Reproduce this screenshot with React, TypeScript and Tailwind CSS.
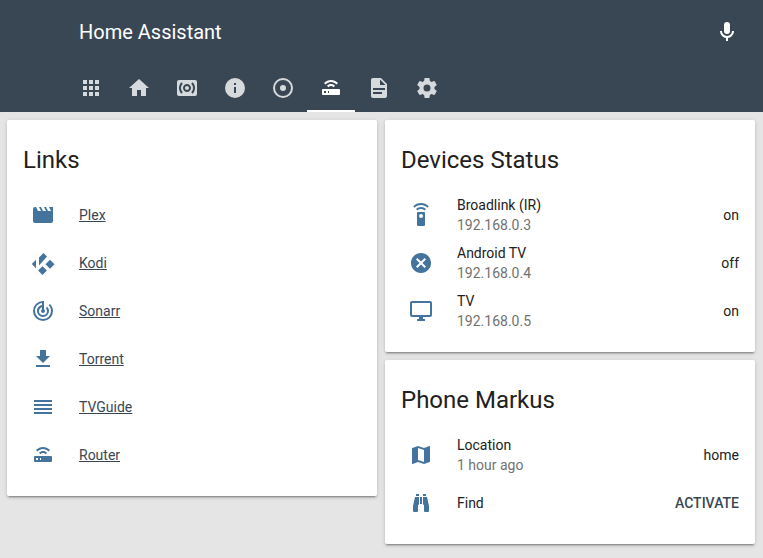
import type { ReactNode } from "react"

const paths = {
  apps: "M16,20H20V16H16M16,14H20V10H16M10,8H14V4H10M16,8H20V4H16M10,14H14V10H10M4,14H8V10H4M4,20H8V16H4M10,20H14V16H10M4,8H8V4H4V8Z",
  home: "M10,20V14H14V20H19V12H22L12,3L2,12H5V20H10Z",
  surround:
    "M20,4H4a2,2 0 0 0-2,2v12a2,2 0 0 0 2,2h16a2,2 0 0 0 2-2V6a2,2 0 0 0-2-2zM7.76,16.24l-1.41,1.41C4.78,16.1 4,14.05 4,12c0-2.05.78-4.1 2.34-5.66l1.41,1.41C6.59,8.93 6,10.46 6,12s.59,3.07 1.76,4.24zM12,16c-2.21,0-4-1.79-4-4s1.79-4 4-4 4,1.79 4,4-1.79,4-4,4zm5.66,1.66l-1.41-1.41C17.41,15.07 18,13.54 18,12s-.59-3.07-1.76-4.24l1.41-1.41C19.22,7.9 20,9.95 20,12c0,2.05-.78,4.1-2.34,5.66zM12,10c-1.1,0-2,.9-2,2s.9,2 2,2 2-.9 2-2-.9-2-2-2z",
  info: "M13,9H11V7H13M13,17H11V11H13M12,2A10,10 0 0,0 2,12A10,10 0 0,0 12,22A10,10 0 0,0 22,12A10,10 0 0,0 12,2Z",
  record:
    "M12,20A8,8 0 0,1 4,12A8,8 0 0,1 12,4A8,8 0 0,1 20,12A8,8 0 0,1 12,20M12,2A10,10 0 0,0 2,12A10,10 0 0,0 12,22A10,10 0 0,0 22,12A10,10 0 0,0 12,2M12,9A3,3 0 0,0 9,12A3,3 0 0,0 12,15A3,3 0 0,0 15,12A3,3 0 0,0 12,9Z",
  router:
    "M4,13H20A1,1 0 0,1 21,14V18A1,1 0 0,1 20,19H4A1,1 0 0,1 3,18V14A1,1 0 0,1 4,13M9,17H10V15H9V17M5,15V17H7V15H5M12,4C14.5,4 17,5 19,7L17.5,8.5C16,7 14,6 12,6C10,6 8,7 6.5,8.5L5,7C7,5 9.5,4 12,4M12,8C13.5,8 15,8.6 16,9.7L14.5,11.2C13.8,10.5 13,10 12,10C11,10 10.2,10.5 9.5,11.2L8,9.7C9,8.6 10.5,8 12,8Z",
  file: "M13,9H18.5L13,3.5V9M6,2H14L20,8V20A2,2 0 0,1 18,22H6C4.89,22 4,21.1 4,20V4C4,2.89 4.89,2 6,2M15,18V16H6V18H15M18,14V12H6V14H18Z",
  settings:
    "M12,15.5A3.5,3.5 0 0,1 8.5,12A3.5,3.5 0 0,1 12,8.5A3.5,3.5 0 0,1 15.5,12A3.5,3.5 0 0,1 12,15.5M19.43,12.97C19.47,12.65 19.5,12.33 19.5,12C19.5,11.67 19.47,11.34 19.43,11L21.54,9.37C21.73,9.22 21.78,8.95 21.66,8.73L19.66,5.27C19.54,5.05 19.27,4.96 19.05,5.05L16.56,6.05C16.04,5.66 15.5,5.32 14.87,5.07L14.5,2.42C14.46,2.18 14.25,2 14,2H10C9.75,2 9.54,2.18 9.5,2.42L9.13,5.07C8.5,5.32 7.96,5.66 7.44,6.05L4.95,5.05C4.73,4.96 4.46,5.05 4.34,5.27L2.34,8.73C2.21,8.95 2.27,9.22 2.46,9.37L4.57,11C4.53,11.34 4.5,11.67 4.5,12C4.5,12.33 4.53,12.65 4.57,12.97L2.46,14.63C2.27,14.78 2.21,15.05 2.34,15.27L4.34,18.73C4.46,18.95 4.73,19.03 4.95,18.95L7.44,17.94C7.96,18.34 8.5,18.68 9.13,18.93L9.5,21.58C9.54,21.82 9.75,22 10,22H14C14.25,22 14.46,21.82 14.5,21.58L14.87,18.93C15.5,18.67 16.04,18.34 16.56,17.94L19.05,18.95C19.27,19.03 19.54,18.95 19.66,18.73L21.66,15.27C21.78,15.05 21.73,14.78 21.54,14.63L19.43,12.97Z",
  mic: "M12,2A3,3 0 0,1 15,5V11A3,3 0 0,1 12,14A3,3 0 0,1 9,11V5A3,3 0 0,1 12,2M19,11C19,14.53 16.39,17.44 13,17.93V21H11V17.93C7.61,17.44 5,14.53 5,11H7A5,5 0 0,0 12,16A5,5 0 0,0 17,11H19Z",
  movie: "M18,4L20,8H17L15,4H13L15,8H12L10,4H8L10,8H7L5,4H4A2,2 0 0,0 2,6V18A2,2 0 0,0 4,20H20A2,2 0 0,0 22,18V4H18Z",
  kodi: "M12.5,2L16,5.5L8,14.5V6.5ZM19,8.8L23.5,13.3L19,17.8L14.5,13.3ZM11.5,15.3L15.9,19.6L11.5,24L7.1,19.6ZM5,8.7V17.3L0.8,13Z",
  radar:
    "M19.07,4.93L17.66,6.34C19.1,7.79 20,9.79 20,12A8,8 0 0,1 12,20A8,8 0 0,1 4,12C4,7.92 7.05,4.56 11,4.07V6.09C8.16,6.57 6,9.03 6,12A6,6 0 0,0 12,18A6,6 0 0,0 18,12C18,10.34 17.33,8.84 16.24,7.76L14.83,9.17C15.55,9.9 16,10.9 16,12A4,4 0 0,1 12,16A4,4 0 0,1 8,12C8,10.14 9.28,8.59 11,8.14V10.28C10.4,10.63 10,11.26 10,12A2,2 0 0,0 12,14A2,2 0 0,0 14,12C14,11.26 13.6,10.62 13,10.28V2H12A10,10 0 0,0 2,12A10,10 0 0,0 12,22A10,10 0 0,0 22,12C22,9.24 20.88,6.74 19.07,4.93Z",
  download: "M5,20H19V18H5M19,9H15V3H9V9H5L12,16L19,9Z",
  headline: "M3,5H21V7H3V5M3,9H21V11H3V9M3,13H21V15H3V13M3,17H21V19H3V17Z",
  remote:
    "M12,0C8.96,0 6.21,1.23 4.22,3.22L5.63,4.63C7.26,3 9.5,2 12,2C14.5,2 16.74,3 18.36,4.64L19.78,3.22C17.79,1.23 15.04,0 12,0M7.05,6.05L8.46,7.46C9.37,6.56 10.62,6 12,6C13.38,6 14.63,6.56 15.54,7.46L16.95,6.05C15.68,4.78 13.93,4 12,4C10.07,4 8.32,4.78 7.05,6.05M12,15A2,2 0 0,1 10,13A2,2 0 0,1 12,11A2,2 0 0,1 14,13A2,2 0 0,1 12,15M15,9H9A1,1 0 0,0 8,10V22A1,1 0 0,0 9,23H15A1,1 0 0,0 16,22V10A1,1 0 0,0 15,9Z",
  closeCircle:
    "M12,2C17.53,2 22,6.47 22,12C22,17.53 17.53,22 12,22C6.47,22 2,17.53 2,12C2,6.47 6.47,2 12,2M15.59,7L12,10.59L8.41,7L7,8.41L10.59,12L7,15.59L8.41,17L12,13.41L15.59,17L17,15.59L13.41,12L17,8.41L15.59,7Z",
  monitor: "M21,16H3V4H21M21,2H3C1.89,2 1,2.89 1,4V16A2,2 0 0,0 3,18H10V20H8V22H16V20H14V18H21A2,2 0 0,0 23,16V4C23,2.89 22.1,2 21,2Z",
  map: "M15,19L9,16.89V5L15,7.11M20.5,3C20.44,3 20.39,3 20.34,3L15,5.1L9,3L3.36,4.9C3.15,4.97 3,5.15 3,5.38V20.5A0.5,0.5 0 0,0 3.5,21C3.55,21 3.61,21 3.66,20.97L9,18.9L15,21L20.64,19.1C20.85,19.03 21,18.85 21,18.62V3.5A0.5,0.5 0 0,0 20.5,3Z",
  binoculars:
    "M11,6H13V13H11V6M9,20A1,1 0 0,1 8,21H5A1,1 0 0,1 4,20V15L6,6H10V13A1,1 0 0,1 9,14V20M10,5H7V3H10V5M15,20V14A1,1 0 0,1 14,13V6H18L20,15V20A1,1 0 0,1 19,21H16A1,1 0 0,1 15,20M14,5V3H17V5H14Z",
}

type IconName = keyof typeof paths

function Icon({ name, className }: { name: IconName; className: string }) {
  return (
    <svg viewBox="0 0 24 24" className={`h-6 w-6 ${className}`} fill="currentColor" fillRule="evenodd">
      <path d={paths[name]} />
    </svg>
  )
}

const tabs: IconName[] = ["apps", "home", "surround", "info", "record", "router", "file", "settings"]

const links: { icon: IconName; label: string }[] = [
  { icon: "movie", label: "Plex" },
  { icon: "kodi", label: "Kodi" },
  { icon: "radar", label: "Sonarr" },
  { icon: "download", label: "Torrent" },
  { icon: "headline", label: "TVGuide" },
  { icon: "router", label: "Router" },
]

const devices: { icon: IconName; name: string; ip: string; state: string }[] = [
  { icon: "remote", name: "Broadlink (IR)", ip: "192.168.0.3", state: "on" },
  { icon: "closeCircle", name: "Android TV", ip: "192.168.0.4", state: "off" },
  { icon: "monitor", name: "TV", ip: "192.168.0.5", state: "on" },
]

function Card({ title, children }: { title: string; children: ReactNode }) {
  return (
    <section className="w-full rounded-[2px] bg-white px-4 pb-[17px] shadow-[0_2px_2px_0_rgba(0,0,0,0.14),0_1px_5px_0_rgba(0,0,0,0.12),0_3px_1px_-2px_rgba(0,0,0,0.2)]">
      <h2 className="pb-[15px] pt-6 text-2xl leading-8 text-[#212121]">{title}</h2>
      {children}
    </section>
  )
}

function Row({ icon, children }: { icon: IconName; children: ReactNode }) {
  return (
    <div className="flex h-12 items-center">
      <div className="flex w-10 shrink-0 justify-center">
        <Icon name={icon} className="text-[#44739e]" />
      </div>
      <div className="ml-4 flex flex-1 items-center justify-between">{children}</div>
    </div>
  )
}

function TwoLines({ primary, secondary }: { primary: string; secondary: string }) {
  return (
    <div>
      <div className="leading-5">{primary}</div>
      <div className="leading-5 text-[#727272]">{secondary}</div>
    </div>
  )
}

export default function App() {
  return (
    <div className="min-h-[558px] bg-[#e5e5e5] font-['Roboto',sans-serif] text-sm text-[#212121]">
      <header className="h-28 bg-[#394754]">
        <div className="flex h-16 items-center justify-between pl-[79px] pr-6">
          <h1 className="text-xl text-white">Home Assistant</h1>
          <Icon name="mic" className="text-white" />
        </div>
        <nav className="flex h-12 pl-[67px]">
          {tabs.map((tab) => (
            <div
              key={tab}
              className={`flex w-12 items-center justify-center ${
                tab === "router" ? "shadow-[inset_0_-2px_0_#ffffff]" : ""
              }`}
            >
              <Icon name={tab} className={tab === "router" ? "text-white" : "text-[#d7dadc]"} />
            </div>
          ))}
        </nav>
      </header>

      <main className="grid grid-cols-[370px_370px] items-start gap-2 pl-[7px] pt-2">
        <Card title="Links">
          {links.map((link) => (
            <Row key={link.label} icon={link.icon}>
              <a href="#" className="text-[#394754] underline">
                {link.label}
              </a>
            </Row>
          ))}
        </Card>

        <div className="flex flex-col gap-2">
          <Card title="Devices Status">
            {devices.map((device) => (
              <Row key={device.name} icon={device.icon}>
                <TwoLines primary={device.name} secondary={device.ip} />
                <span>{device.state}</span>
              </Row>
            ))}
          </Card>

          <Card title="Phone Markus">
            <Row icon="map">
              <TwoLines primary="Location" secondary="1 hour ago" />
              <span>home</span>
            </Row>
            <Row icon="binoculars">
              <span>Find</span>
              <span className="font-medium text-[#394754]">ACTIVATE</span>
            </Row>
          </Card>
        </div>
      </main>
    </div>
  )
}
